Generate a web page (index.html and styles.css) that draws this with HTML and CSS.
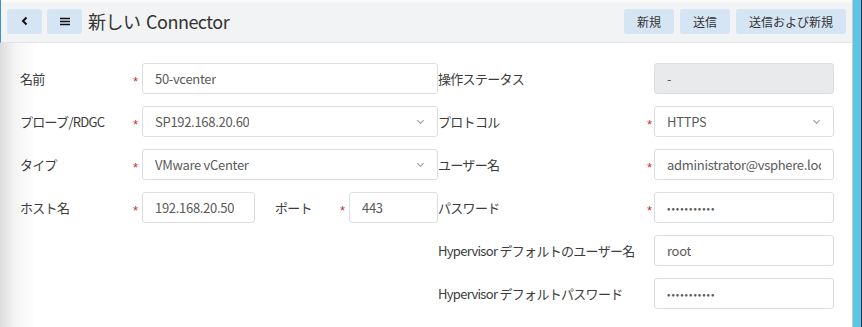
FILE: index.html
```html
<!DOCTYPE html>
<html lang="ja">
<head>
    <meta charset="UTF-8">
    <meta name="viewport" content="width=device-width, initial-scale=1.0">
    <title>新しい Connector</title>
    <link rel="stylesheet" href="styles.css">
</head>
<body>
    <div class="app">
        <div class="page">
            <div class="header">
                <button class="hbtn icon" title="戻る">
                    <svg width="10" height="10" viewBox="0 0 10 10"><path d="M6.5 1.5 L3 5 L6.5 8.5" fill="none" stroke="#111" stroke-width="2"/></svg>
                </button>
                <button class="hbtn icon" title="メニュー">
                    <svg width="10" height="9" viewBox="0 0 10 9"><path d="M0 1.5h10M0 4.5h10M0 7.5h10" stroke="#111" stroke-width="1.6"/></svg>
                </button>
                <div class="title">新しい Connector</div>
                <div class="actions">
                    <button class="hbtn">新規</button>
                    <button class="hbtn">送信</button>
                    <button class="hbtn">送信および新規</button>
                </div>
            </div>

            <div class="form">
                <div class="col left">
                    <div class="row">
                        <label class="lbl">名前</label>
                        <span class="req">*</span>
                        <div class="field"><span class="val">50-vcenter</span></div>
                    </div>
                    <div class="row">
                        <label class="lbl">プローブ/RDGC</label>
                        <span class="req">*</span>
                        <div class="field select"><span class="val">SP192.168.20.60</span><span class="chev"></span></div>
                    </div>
                    <div class="row">
                        <label class="lbl">タイプ</label>
                        <span class="req">*</span>
                        <div class="field select"><span class="val">VMware vCenter</span><span class="chev"></span></div>
                    </div>
                    <div class="row">
                        <label class="lbl">ホスト名</label>
                        <span class="req">*</span>
                        <div class="field host"><span class="val">192.168.20.50</span></div>
                        <label class="lbl port-lbl">ポート</label>
                        <span class="req">*</span>
                        <div class="field"><span class="val">443</span></div>
                    </div>
                </div>

                <div class="col right">
                    <div class="row">
                        <label class="lbl">操作ステータス</label>
                        <span class="req"></span>
                        <div class="field readonly"><span class="val">-</span></div>
                    </div>
                    <div class="row">
                        <label class="lbl">プロトコル</label>
                        <span class="req">*</span>
                        <div class="field select"><span class="val">HTTPS</span><span class="chev"></span></div>
                    </div>
                    <div class="row">
                        <label class="lbl">ユーザー名</label>
                        <span class="req">*</span>
                        <div class="field"><span class="val">administrator@vsphere.local</span></div>
                    </div>
                    <div class="row">
                        <label class="lbl">パスワード</label>
                        <span class="req">*</span>
                        <div class="field pw"><span class="val">•••••••••••</span></div>
                    </div>
                    <div class="row">
                        <label class="lbl">Hypervisor デフォルトのユーザー名</label>
                        <span class="req"></span>
                        <div class="field"><span class="val">root</span></div>
                    </div>
                    <div class="row">
                        <label class="lbl">Hypervisor デフォルトパスワード</label>
                        <span class="req"></span>
                        <div class="field pw"><span class="val">•••••••••••</span></div>
                    </div>
                </div>
            </div>
        </div>
        <div class="edge"></div>
    </div>
</body>
</html>
```

FILE: styles.css
```css
* {
    padding: 0;
    margin: 0;
    box-sizing: border-box;
}

body {
    font-family: "Noto Sans CJK JP", "Noto Sans", sans-serif;
    font-size: 13px;
    color: #333;
    background-color: white;
}

.app {
    display: flex;
    width: 862px;
    height: 327px;
    overflow: hidden;
}
.page {
    flex: 1;
    display: flex;
    flex-direction: column;
    background: linear-gradient(90deg, #dcdcdc 0, #f4f4f4 14px, #ffffff 36px);
    border-right: 1px solid #c9cdd2;
}
.edge {
    width: 9px;
    background-color: #5bc5e6;
    border-right: 1px solid #2a3a44;
}

.header {
    height: 43px;
    display: flex;
    align-items: center;
    padding: 0 6px 0 6px;
    background: linear-gradient(#fdfdfd 0, #f2f3f4 4px);
    border-bottom: 1px solid #e1e3e5;
    border-left: 1px solid #3d8fd1;
}
.hbtn {
    height: 25px;
    padding: 0 13px;
    border: none;
    border-radius: 3px;
    background-color: #d6e5f3;
    font-family: "Noto Sans CJK JP", sans-serif;
    font-size: 12px;
    color: #333;
    cursor: pointer;
}
.hbtn.icon {
    width: 35px;
    padding: 0;
    display: flex;
    align-items: center;
    justify-content: center;
    margin-right: 5px;
}
.title {
    font-size: 18px;
    letter-spacing: -0.5px;
    word-spacing: 2px;
    color: #333;
    margin-left: 1px;
    margin-top: -1px;
}
.actions {
    margin-left: auto;
    display: flex;
    gap: 6px;
}

.form {
    display: flex;
    padding: 20px 0 0 20px;
}
.col {
    display: flex;
    flex-direction: column;
    gap: 12px;
}
.left {
    width: 418px;
}
.right {
    width: 396px;
}
.row {
    display: flex;
    align-items: center;
    height: 31px;
}
.lbl {
    width: 113px;
    white-space: nowrap;
    letter-spacing: -0.7px;
    color: #3c3c3c;
}
.right .lbl {
    width: 209px;
}
.req {
    width: 9px;
    color: #c9302c;
    font-family: "Liberation Sans", sans-serif;
    font-size: 13px;
    position: relative;
    top: 3px;
}
.right .req {
    width: 7px;
}
.field {
    height: 31px;
    flex: 1;
    display: flex;
    align-items: center;
    position: relative;
    padding: 0 12px;
    border: 1px solid #dcdfe2;
    border-radius: 3px;
    background-color: white;
    color: #5a5a5a;
}
.val {
    white-space: nowrap;
    overflow: hidden;
    letter-spacing: -0.3px;
}
.right .field {
    flex: none;
    width: 180px;
}
.field.host {
    flex: none;
    width: 113px;
}
.port-lbl {
    width: 65px;
    margin-left: 20px;
}
.field.readonly {
    background-color: #e9eaeb;
}
.field.pw .val {
    font-size: 10px;
    letter-spacing: 1px;
}
.chev {
    position: absolute;
    right: 14px;
    top: 11px;
    width: 5px;
    height: 5px;
    border-right: 1px solid #999;
    border-bottom: 1px solid #999;
    transform: rotate(45deg);
}
```
